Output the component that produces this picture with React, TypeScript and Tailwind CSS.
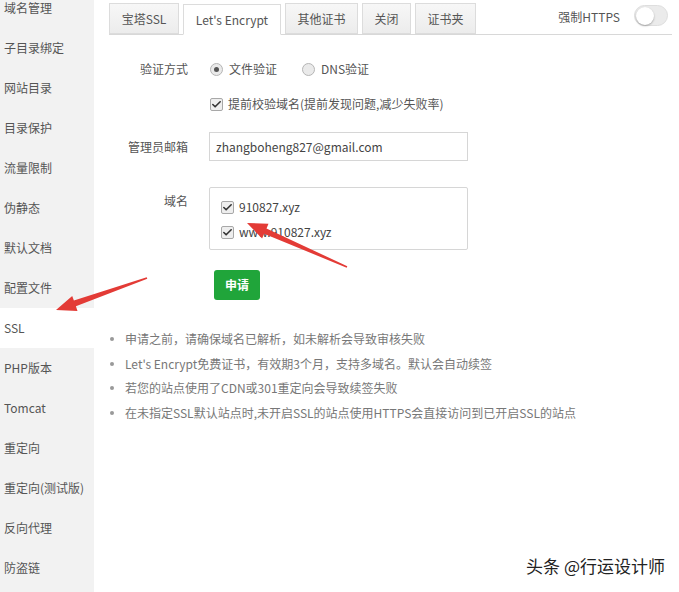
import { Check } from "lucide-react";

const menu = [
  "域名管理",
  "子目录绑定",
  "网站目录",
  "目录保护",
  "流量限制",
  "伪静态",
  "默认文档",
  "配置文件",
  "SSL",
  "PHP版本",
  "Tomcat",
  "重定向",
  "重定向(测试版)",
  "反向代理",
  "防盗链",
];

const tips = [
  "申请之前，请确保域名已解析，如未解析会导致审核失败",
  "Let's Encrypt免费证书，有效期3个月，支持多域名。默认会自动续签",
  "若您的站点使用了CDN或301重定向会导致续签失败",
  "在未指定SSL默认站点时,未开启SSL的站点使用HTTPS会直接访问到已开启SSL的站点",
];

function Box() {
  return (
    <span className="flex h-[13px] w-[13px] items-center justify-center rounded-[2px] border border-[#a8a8a8] bg-[#eeeeee]">
      <Check className="h-[11px] w-[11px] text-[#333]" strokeWidth={3.5} />
    </span>
  );
}

function Radio({ on }: { on?: boolean }) {
  return (
    <span className="flex h-[13px] w-[13px] items-center justify-center rounded-full border border-[#b5b5b5] bg-[#eaeaea]">
      {on && <span className="h-[5px] w-[5px] rounded-full bg-[#555]" />}
    </span>
  );
}

const tabs = [
  { t: "宝塔SSL", w: "w-[70px] mr-[4px]" },
  { t: "Let's Encrypt", w: "w-[98px] mr-[4px]" },
  { t: "其他证书", w: "w-[73px] mr-[4px]" },
  { t: "关闭", w: "w-[49px] mr-[4px]" },
  { t: "证书夹", w: "w-[61px]" },
];

export default function App() {
  return (
    <div
      className="relative flex h-[592px] w-[679px] overflow-hidden bg-white text-[12px] text-[#555]"
      style={{ fontFamily: '"Noto Sans CJK SC", "Noto Sans", sans-serif' }}
    >
      {/* sidebar */}
      <div className="w-[94px] shrink-0 bg-[#f2f2f2]">
        <div className="-mt-[12px]">
          {menu.map((m) => (
            <div
              key={m}
              className={`flex h-[40px] items-center whitespace-nowrap pl-[4px] text-[12px] text-[#555] ${m === "SSL" ? "bg-white" : ""}`}
            >
              {m}
            </div>
          ))}
        </div>
      </div>

      {/* main */}
      <div className="flex-1 pl-[15px] pr-[7px] pt-[3px]">
        <div className="flex items-end border-b border-[#d8d8d8]">
          {tabs.map((tab, i) => (
            <div
              key={tab.t}
              className={`flex h-[31px] shrink-0 items-center justify-center whitespace-nowrap border border-[#dcdcdc] text-[12px] text-[#555] ${tab.w} ${
                i === 1 ? "-mb-px border-b-white bg-white" : "bg-gradient-to-b from-[#f7f7f7] to-[#ececec]"
              }`}
            >
              {tab.t}
            </div>
          ))}
          <div className="ml-auto mr-[4px] flex h-[31px] items-start pt-[2px]">
            <span className="mr-[14px] mt-[3px] whitespace-nowrap text-[12px] text-[#555]">强制HTTPS</span>
            <span className="flex h-[21px] w-[34px] items-center rounded-full border border-[#dedede] bg-[#ebebeb] pl-[1px]">
              <span className="h-[18px] w-[18px] rounded-full bg-white shadow-[0_1px_2px_rgba(0,0,0,0.3)]" />
            </span>
          </div>
        </div>

        <div className="pt-[23px]">
          <div className="flex h-[22px] items-center">
            <div className="w-[79px] text-right">验证方式</div>
            <div className="ml-[22px] flex items-center">
              <Radio on />
              <span className="ml-[6px]">文件验证</span>
              <span className="ml-[25px]"><Radio /></span>
              <span className="ml-[6px]">DNS验证</span>
            </div>
          </div>

          <div className="mt-[13px] flex h-[22px] items-center pl-[101px]">
            <Box />
            <span className="ml-[5px]">提前校验域名(提前发现问题,减少失败率)</span>
          </div>

          <div className="mt-[17px] flex items-center">
            <div className="w-[79px] text-right">管理员邮箱</div>
            <div className="ml-[21px] flex h-[29px] w-[259px] items-center border border-[#d6d6d6] px-[6px] text-[12px] text-[#444]">
              zhangboheng827@gmail.com
            </div>
          </div>

          <div className="mt-[26px] flex items-start">
            <div className="w-[79px] pt-[5px] text-right">域名</div>
            <div className="ml-[21px] h-[63px] w-[259px] rounded-[2px] border border-[#d6d6d6] pl-[11px] pt-[9px] text-[#444]">
              <div className="flex h-[20px] items-center">
                <Box />
                <span className="ml-[5px]">910827.xyz</span>
              </div>
              <div className="mt-[5px] flex h-[20px] items-center">
                <Box />
                <span className="ml-[5px]">www.910827.xyz</span>
              </div>
            </div>
          </div>

          <div className="mt-[20px] pl-[105px]">
            <button className="flex h-[30px] w-[46px] items-center justify-center rounded-[3px] bg-[#20a53a] text-[12px] font-bold text-white">
              申请
            </button>
          </div>

          <ul className="mt-[27px] pl-[1px]">
            {tips.map((t) => (
              <li key={t} className="flex h-[24.5px] items-center whitespace-nowrap text-[12px] text-[#777]">
                <span className="mr-[11px] h-[4px] w-[4px] rounded-full bg-[#999]" />
                {t}
              </li>
            ))}
          </ul>
        </div>
      </div>

      {/* annotation arrows */}
      <svg className="pointer-events-none absolute left-0 top-0" width="679" height="592">
        <polygon
          points="247,223 268.5,223.8 266.5,228.4 347.3,266.3 346.7,267.7 264.1,233.8 262.1,238.4"
          fill="#e33b36"
        />
        <polygon
          points="56,310 77.5,311 75.9,306.2 147.3,278.8 146.7,277.2 73.9,300.6 72.2,295.9"
          fill="#e33b36"
        />
      </svg>

      {/* watermark */}
      <div
        className="absolute bottom-[14px] right-[14px] text-[17px] text-[#222]"
        style={{ textShadow: "0 0 3px #fff, 0 0 3px #fff" }}
      >
        头条 @行运设计师
      </div>
    </div>
  );
}
